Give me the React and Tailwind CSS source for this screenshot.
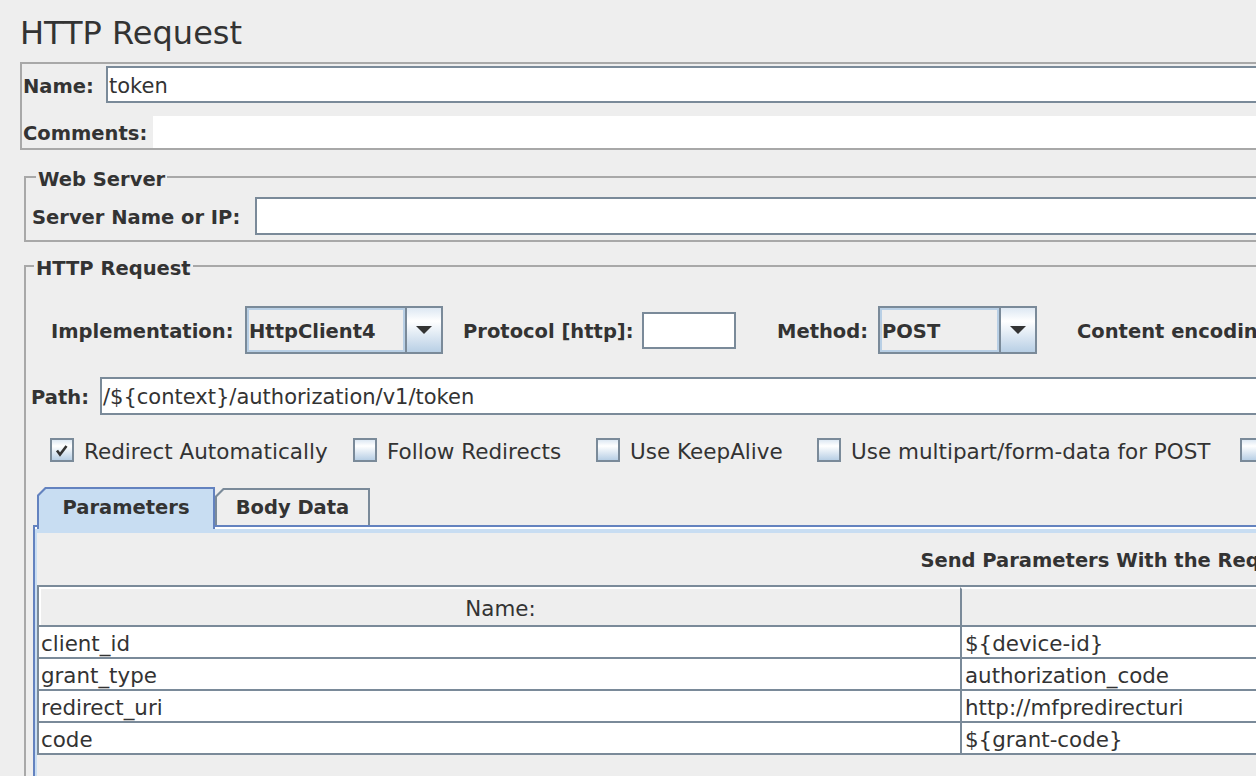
import React from 'react';

const Label = ({ className = '', children }) => (
  <span className={`shrink-0 whitespace-nowrap font-bold text-[19.5px] leading-none pt-[4px] ${className}`}>{children}</span>
);

const TextField = ({ className = '', children }) => (
  <div className={`flex items-center border-2 border-[#7a8a99] bg-white text-[21px] pt-[4px] whitespace-nowrap overflow-hidden ${className}`}>
    {children}
  </div>
);

const Arrow = () => (
  <svg width="16" height="8" viewBox="0 0 16 8">
    <polygon points="0,0 16,0 8,8" fill="#333333" />
  </svg>
);

const Combo = ({ value, textW }) => (
  <div className="flex h-[48px] shrink-0 border-2 border-[#7a8a99]">
    <div className={`${textW} flex items-center border-2 border-[#b8cfe5] bg-[#eeeeee] pt-[3px] font-bold text-[19.5px]`}>
      {value}
    </div>
    <div className="w-[36px] flex items-center justify-center border-l-2 border-[#7a8a99] bg-linear-to-b from-[#dde8f3] via-white via-30% to-[#b8cfe5]">
      <Arrow />
    </div>
  </div>
);

const Checkbox = ({ checked, label, className = '' }) => (
  <div className={`flex items-center shrink-0 ${className}`}>
    <div className="w-[24px] h-[24px] flex items-center justify-center border-2 border-[#7a8a99] bg-linear-to-b from-[#dde8f3] via-white via-30% to-[#b8cfe5]">
      {checked && (
        <svg width="16" height="16" viewBox="0 0 16 16">
          <path d="M3 8.5 L6 12.5 L12.5 4" fill="none" stroke="#333333" strokeWidth="2.6" />
        </svg>
      )}
    </div>
    <span className="ml-[10px] pt-[4px] text-[21.5px] whitespace-nowrap">{label}</span>
  </div>
);

const params = [
  ['client_id', '${device-id}'],
  ['grant_type', 'authorization_code'],
  ['redirect_uri', 'http://mfpredirecturi'],
  ['code', '${grant-code}'],
];

export default function App() {
  return (
    <div className="w-[1256px] h-[776px] overflow-hidden bg-[#eeeeee] text-[#333333] font-['DejaVu_Sans',sans-serif]">
      <div className="w-[2300px]">
        {/* Title */}
        <div className="h-[62px] pt-[17px] pl-[20px] text-[32px] leading-[32px]">HTTP Request</div>

        {/* Name / Comments */}
        <div className="ml-[20px] border-2 border-[#a8a8a8] pl-[1px]">
          <div className="flex items-center pt-[2px]">
            <Label className="w-[83px]">Name:</Label>
            <TextField className="flex-1 h-[37px] pl-[1px]">token</TextField>
          </div>
          <div className="flex items-center mt-[13px]">
            <Label className="w-[130px]">Comments:</Label>
            <div className="flex-1 h-[32px] bg-white" />
          </div>
        </div>

        {/* Web Server */}
        <fieldset className="ml-[24px] mt-[14px] border-2 border-[#a8a8a8] pl-[6px] pb-[5px]">
          <legend className="ml-[4px] px-[2px] pt-[6px] font-bold text-[19.5px] leading-[20px]">Web Server</legend>
          <div className="flex items-center mt-[7px]">
            <Label className="w-[223px]">Server Name or IP:</Label>
            <TextField className="flex-1 h-[38px]" />
          </div>
        </fieldset>

        {/* HTTP Request */}
        <fieldset className="ml-[24px] mt-[11px] border-2 border-[#a8a8a8] pl-[5px]">
          <legend className="ml-[3px] px-[2px] pt-[6px] font-bold text-[19.5px] leading-[20px]">HTTP Request</legend>

          <div className="flex items-center mt-[27px] ml-[20px] h-[48px]">
            <Label className="w-[194px]">Implementation:</Label>
            <Combo value="HttpClient4" textW="w-[158px]" />
            <Label className="ml-[20px] w-[179px]">Protocol [http]:</Label>
            <TextField className="w-[94px] h-[37px]" />
            <Label className="ml-[41px] w-[101px]">Method:</Label>
            <Combo value="POST" textW="w-[119px]" />
            <Label className="ml-[40px] w-[200px]">Content encoding:</Label>
            <TextField className="w-[120px] h-[37px]" />
          </div>

          <div className="flex items-center mt-[23px]">
            <Label className="w-[69px]">Path:</Label>
            <TextField className="flex-1 h-[38px] pl-[1px]">/${'{'}context{'}'}/authorization/v1/token</TextField>
          </div>

          <div className="flex items-center mt-[23px] ml-[19px] h-[24px]">
            <Checkbox checked label="Redirect Automatically" className="w-[303px]" />
            <Checkbox label="Follow Redirects" className="w-[243px]" />
            <Checkbox label="Use KeepAlive" className="w-[221px]" />
            <Checkbox label="Use multipart/form-data for POST" className="w-[423px]" />
            <Checkbox label="Browser-compatible headers" />
          </div>

          {/* Tabs */}
          <div className="mt-[25px] ml-[2px]">
            <div className="relative z-10 flex items-end pl-[4px] -mb-[4px]">
              <div className="w-[178px] h-[42px] bg-[#6382bf] px-[2px] pt-[2px] [clip-path:polygon(8px_0,100%_0,100%_100%,0_100%,0_8px)]">
                <div className="h-full bg-[#c8ddf2] flex justify-center pt-[7px] font-bold text-[19.5px] leading-[24px] [clip-path:polygon(7px_0,100%_0,100%_100%,0_100%,0_7px)]">
                  Parameters
                </div>
              </div>
              <div className="w-[155px] h-[37px] mb-[4px] bg-[#7a8a99] px-[2px] pt-[2px] [clip-path:polygon(8px_0,100%_0,100%_100%,0_100%,0_8px)]">
                <div className="h-full bg-[#eeeeee] flex justify-center pt-[6px] font-bold text-[19.5px] leading-[24px] [clip-path:polygon(7px_0,100%_0,100%_100%,0_100%,0_7px)]">
                  Body Data
                </div>
              </div>
            </div>

            <div className="border-t-2 border-l-2 border-[#6382bf]">
              <div className="border-t-2 border-white">
                <div className="border-t-4 border-l-2 border-[#c8ddf2] h-[400px]">
                  <div className="w-[2162px] h-[52px] pt-[4px] flex items-center justify-center font-bold text-[19.5px]">
                    Send Parameters With the Request:
                  </div>
                  <div className="border-t-2 border-l-2 border-[#7a8a99] text-[21.4px]">
                    <div className="flex h-[40px] border-b-2 border-[#7a8a99]">
                      <div className="w-[921px] flex items-center justify-center pt-[4px] border-t-2 border-l-2 border-white">Name:</div>
                      <div className="flex-1 border-l-2 border-[#7a8a99] border-t-2 border-t-white" />
                    </div>
                    {params.map(([name, value]) => (
                      <div key={name} className="flex h-[32px] border-b-2 border-[#7a8a99] bg-white">
                        <div className="w-[921px] flex items-center pl-[2px] pt-[4px] whitespace-nowrap">{name}</div>
                        <div className="flex-1 flex items-center pl-[3px] pt-[4px] border-l-2 border-[#7a8a99] whitespace-nowrap">{value}</div>
                      </div>
                    ))}
                  </div>
                </div>
              </div>
            </div>
          </div>
        </fieldset>
      </div>
    </div>
  );
}
